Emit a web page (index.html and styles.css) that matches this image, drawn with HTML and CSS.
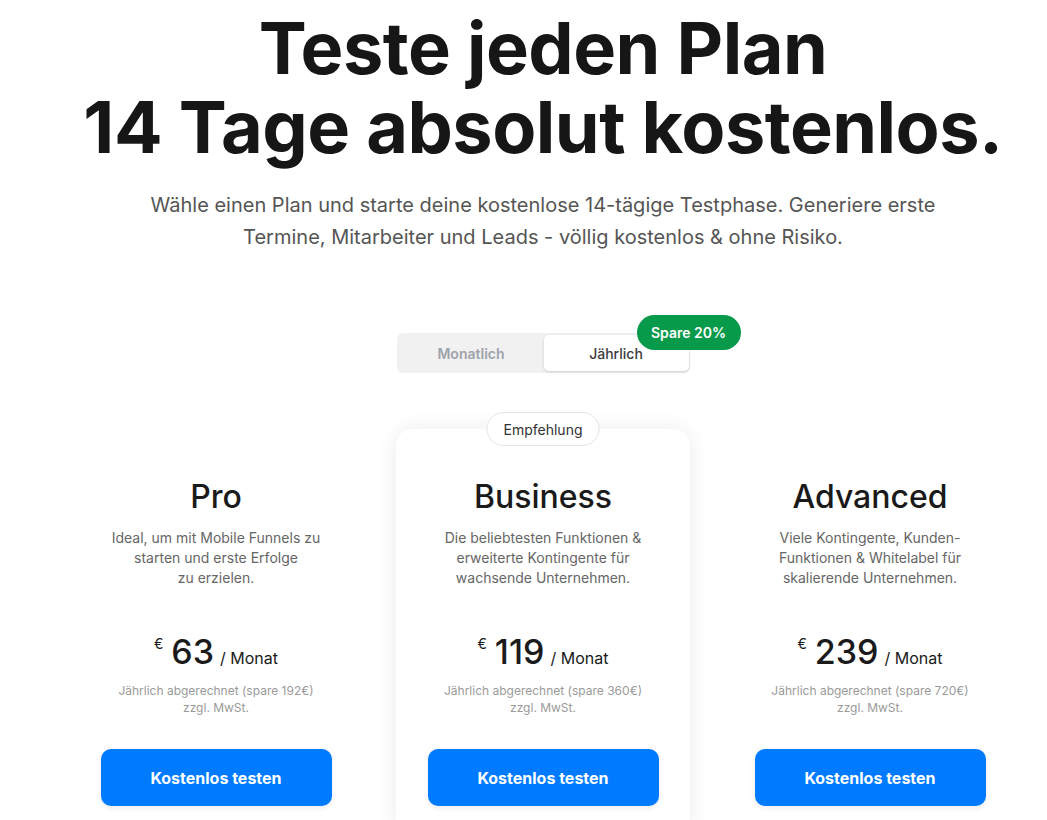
FILE: index.html
```html
<!DOCTYPE html>
<html lang="de">
<head>
  <meta charset="UTF-8">
  <title>Preise</title>
  <link rel="stylesheet" href="styles.css">
</head>
<body>
  <div class="page">
    <h1 class="hero-title"><span>Teste jeden Plan</span><span>14 Tage absolut kostenlos.</span></h1>
    <p class="hero-sub">Wähle einen Plan und starte deine kostenlose 14-tägige Testphase. Generiere erste Termine, Mitarbeiter und Leads - völlig kostenlos &amp; ohne Risiko.</p>

    <div class="toggle">
      <button class="toggle-btn" type="button">Monatlich</button>
      <button class="toggle-btn active" type="button">Jährlich</button>
      <span class="save-badge">Spare 20%</span>
    </div>

    <div class="plans">
      <div class="plan">
        <h2 class="plan-name">Pro</h2>
        <p class="plan-desc">Ideal, um mit Mobile Funnels zu starten und erste Erfolge<br>zu erzielen.</p>
        <div class="price"><span class="cur">€</span><span class="amount">63</span><span class="per">/ Monat</span></div>
        <p class="note">Jährlich abgerechnet (spare 192€)<br>zzgl. MwSt.</p>
        <button class="btn" type="button">Kostenlos testen</button>
      </div>

      <div class="plan featured">
        <span class="tag">Empfehlung</span>
        <h2 class="plan-name">Business</h2>
        <p class="plan-desc">Die beliebtesten Funktionen &amp; erweiterte Kontingente für wachsende Unternehmen.</p>
        <div class="price"><span class="cur">€</span><span class="amount">119</span><span class="per">/ Monat</span></div>
        <p class="note">Jährlich abgerechnet (spare 360€)<br>zzgl. MwSt.</p>
        <button class="btn" type="button">Kostenlos testen</button>
      </div>

      <div class="plan">
        <h2 class="plan-name">Advanced</h2>
        <p class="plan-desc">Viele Kontingente, Kunden-<br>Funktionen &amp; Whitelabel für skalierende Unternehmen.</p>
        <div class="price"><span class="cur">€</span><span class="amount">239</span><span class="per">/ Monat</span></div>
        <p class="note">Jährlich abgerechnet (spare 720€)<br>zzgl. MwSt.</p>
        <button class="btn" type="button">Kostenlos testen</button>
      </div>
    </div>
  </div>
</body>
</html>
```

FILE: styles.css
```css
body { margin: 0; font-family: Inter, "Noto Sans", sans-serif; background: #fff; color: #1a1a1a; overflow: hidden; }
.page { padding-left: 39px; display: flex; flex-direction: column; align-items: center; }

.hero-title { margin: 9px 0 0; font-size: 72px; font-weight: 700; letter-spacing: -0.5px; text-align: center; color: #161616; white-space: nowrap; display: flex; flex-direction: column; gap: 1px; }
.hero-title span { line-height: 78px; height: 78px; }
.hero-sub { margin: 23px 0 0; max-width: 800px; font-size: 20px; line-height: 32px; color: #555; text-align: center; }

.toggle { position: relative; margin-top: 80px; width: 293px; height: 40px; padding: 2px 1px 2px 2px; box-sizing: border-box; background: #f1f1f1; border-radius: 6px; display: flex; }
.toggle-btn { flex: 1; border: none; background: transparent; font-family: inherit; font-size: 14px; font-weight: 600; color: #9ea3ab; border-radius: 5px; cursor: pointer; }
.toggle-btn.active { background: #fff; color: #3b3b3b; font-weight: 500; box-shadow: 0 1px 3px rgba(0,0,0,0.15); }
.save-badge { position: absolute; left: 240px; top: -18px; width: 104px; height: 35px; border-radius: 18px; background: #079a4b; color: #fff; font-size: 14px; font-weight: 600; display: flex; align-items: center; justify-content: center; }

.plans { margin-top: 56px; display: grid; grid-template-columns: repeat(3, 294px); gap: 33px; }
.plan { position: relative; padding: 48px 31px 30px; border-radius: 16px; text-align: center; display: flex; flex-direction: column; align-items: center; }
.plan.featured { background: #fff; box-shadow: 0 0 22px rgba(0,0,0,0.08); }
.tag { position: absolute; top: -17px; left: 50%; transform: translateX(-50%); height: 34px; padding: 0 16px; box-sizing: border-box; border: 1px solid #e4e4e4; border-radius: 17px; background: #fff; font-size: 14px; color: #333; display: flex; align-items: center; white-space: nowrap; }

.plan-name { margin: 0; font-size: 32px; line-height: 40px; font-weight: 500; color: #1a1a1a; }
.plan-desc { margin: 11px 0 0; max-width: 215px; height: 60px; font-size: 14px; line-height: 20px; color: #666; }
.price { margin-top: 44px; height: 40px; display: flex; align-items: baseline; justify-content: center; color: #1a1a1a; }
.cur { font-size: 14px; align-self: flex-start; margin-top: 3px; margin-right: 8px; }
.amount { font-size: 34px; line-height: 40px; font-weight: 500; margin-right: 6px; }
.per { font-size: 16px; }
.note { margin: 10px 0 0; font-size: 12px; line-height: 17px; color: #9a9a9a; }
.btn { margin-top: 33px; width: 231px; height: 57px; border: none; border-radius: 10px; background: #007bff; color: #fff; font-family: inherit; font-size: 16px; font-weight: 700; cursor: pointer; box-shadow: 0 2px 6px rgba(0,0,0,0.08); }
```
